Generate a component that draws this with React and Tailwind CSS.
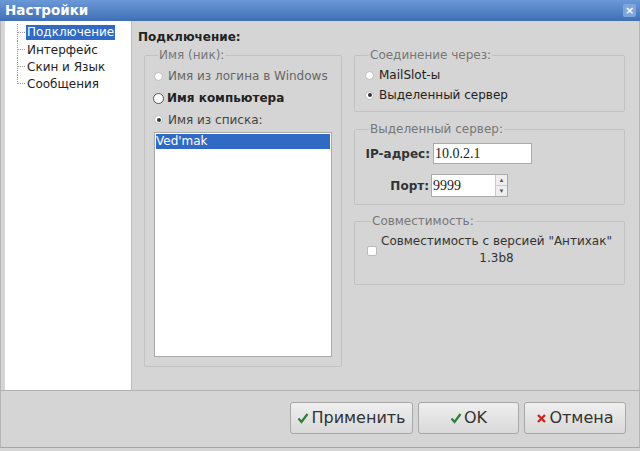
import React from 'react';

const font = { fontFamily: '"DejaVu Sans", Verdana, sans-serif' };

function Radio({ checked, focus }) {
  if (focus) {
    return (
      <span className="inline-flex w-[11px] h-[11px] rounded-full border border-[#555] bg-white shrink-0" />
    );
  }
  return (
    <span className="inline-flex items-center justify-center w-[9px] h-[9px] rounded-full border border-[#bbb] bg-white shrink-0">
      {checked && <span className="w-[4px] h-[4px] rounded-full bg-[#333]" />}
    </span>
  );
}

function Group({ title, className, children }) {
  return (
    <fieldset className={`border border-[#c2c2c2] rounded-[2px] ${className}`}>
      <legend className="ml-[4px] px-[1px] text-[12px] text-[#777] leading-[13px] whitespace-nowrap">{title}</legend>
      {children}
    </fieldset>
  );
}

function Check({ color }) {
  return (
    <svg width="12" height="12" viewBox="0 0 12 12">
      <path d="M1.5 6.5 L4.5 10 L10.5 2" fill="none" stroke={color} strokeWidth="2.2" />
    </svg>
  );
}

export default function App() {
  const tree = ['Подключение', 'Интерфейс', 'Скин и Язык', 'Сообщения'];

  return (
    <div className="w-[640px] h-[451px] bg-[#d5d5d5] flex flex-col text-[#222] overflow-hidden whitespace-nowrap" style={font}>
      {/* заголовок */}
      <div className="h-[21px] bg-gradient-to-b from-[#6b98d6] to-[#3f6fb6] flex items-center justify-between pl-[5px] pr-[4px]">
        <span className="text-white font-bold text-[13.5px]">Настройки</span>
        <span className="w-[13px] h-[13px] rounded-[2px] bg-[#7fa6dc] text-white text-[11px] leading-[13px] text-center font-bold">×</span>
      </div>

      <div className="flex-1 flex pl-[4px] pr-[4px] border-x border-[#b5b5b5]">
        {/* дерево */}
        <div className="w-[127px] bg-white border-r border-[#bdbdbd] pt-[3px] text-[12px]">
          {tree.map((t, i) => (
            <div key={t} className="flex items-center h-[17px]">
              <div className="relative w-[21px] h-[17px]">
                <div className={`absolute left-[12px] top-0 ${i === tree.length - 1 ? 'h-[9px]' : 'h-[17px]'} border-l border-dotted border-[#999]`} />
                <div className="absolute left-[12px] top-[8px] w-[8px] border-t border-dotted border-[#999]" />
              </div>
              <span className={i === 0 ? 'bg-[#316ac5] text-white px-[1px] leading-[15px]' : 'px-[1px]'}>{t}</span>
            </div>
          ))}
        </div>

        {/* содержимое */}
        <div className="flex-1 pl-[6px] pt-[8px]">
          <div className="font-bold text-[12px] leading-[16px]">Подключение:</div>
          <div className="flex mt-[4px]">
            <Group title="Имя (ник):" className="w-[198px] h-[318px] ml-[6px] px-[9px] pt-[3px]">
              <div className="flex items-center gap-[5px] h-[22px] text-[12px] text-[#666]">
                <Radio />
                <span>Имя из логина в Windows</span>
              </div>
              <div className="flex items-center gap-[3px] h-[22px] text-[12px] font-bold text-[#222] -ml-[1px]">
                <Radio focus />
                <span>Имя компьютера</span>
              </div>
              <div className="flex items-center gap-[5px] h-[21px] text-[12px] text-[#444]">
                <Radio checked />
                <span>Имя из списка:</span>
              </div>
              <div className="mt-[2px] w-[178px] h-[225px] bg-white border border-[#aaa] p-[1px]">
                <div className="bg-[#316ac5] text-white text-[12px] leading-[15px]">Ved'mak</div>
              </div>
            </Group>

            <div className="ml-[12px] w-[271px] flex flex-col">
              <Group title="Соединение через:" className="h-[63px] px-[10px] pt-[3px]">
                <div className="flex items-center gap-[5px] h-[20px] text-[12px]">
                  <Radio />
                  <span>MailSlot-ы</span>
                </div>
                <div className="flex items-center gap-[5px] h-[20px] text-[12px]">
                  <Radio checked />
                  <span>Выделенный сервер</span>
                </div>
              </Group>

              <Group title="Выделенный сервер:" className="h-[82px] mt-[11px] pl-[10px] pt-[7px]">
                <div className="flex items-center">
                  <span className="w-[65px] text-right text-[12px] font-bold text-[#333]">IP-адрес:</span>
                  <div className="ml-[3px] w-[99px] h-[21px] bg-white border border-[#aaa] flex items-center pl-[1px] text-[14px]" style={{ fontFamily: '"Liberation Serif", serif' }}>
                    10.0.2.1
                  </div>
                </div>
                <div className="flex items-center mt-[10px]">
                  <span className="w-[64px] text-right text-[12px] font-bold text-[#333]">Порт:</span>
                  <div className="ml-[2px] w-[77px] h-[23px] bg-white border border-[#aaa] flex items-center text-[14px]" style={{ fontFamily: '"Liberation Serif", serif' }}>
                    <span className="flex-1 pl-[1px]">9999</span>
                    <div className="w-[12px] h-full flex flex-col border-l border-[#ccc] bg-[#eee]">
                      <span className="flex-1 flex items-center justify-center text-[6px] text-[#555] border-b border-[#ccc]">▲</span>
                      <span className="flex-1 flex items-center justify-center text-[6px] text-[#555]">▼</span>
                    </div>
                  </div>
                </div>
              </Group>

              <Group title="Совместимость:" className="h-[70px] mt-[10px] pl-[12px]">
                <div className="flex items-center mt-[5px]">
                  <span className="w-[10px] h-[10px] bg-white border border-[#bbb] rounded-[2px] mt-[2px]" />
                  <div className="flex-1 text-center text-[12px] leading-[17px] text-[#333] pr-[8px]">
                    Совместимость с версией "Антихак"<br />1.3b8
                  </div>
                </div>
              </Group>
            </div>
          </div>
        </div>
      </div>

      {/* кнопки */}
      <div className="h-[58px] border-t border-[#b0b0b0] border-x border-b border-x-[#b5b5b5] border-b-[#a5a5a5] flex items-start justify-end gap-[5px] pt-[11px] pr-[13px] mb-[3px]">
        <button className="w-[123px] h-[32px] bg-gradient-to-b from-[#efefef] to-[#d9d9d9] border border-[#a8a8a8] rounded-[3px] flex items-center justify-center gap-[2px] text-[16px] text-[#333]">
          <Check color="#2e7d3a" />Применить
        </button>
        <button className="w-[101px] h-[32px] bg-gradient-to-b from-[#efefef] to-[#d9d9d9] border border-[#a8a8a8] rounded-[3px] flex items-center justify-center gap-[2px] text-[16px] text-[#333]">
          <Check color="#2e7d3a" />OK
        </button>
        <button className="w-[102px] h-[32px] bg-gradient-to-b from-[#efefef] to-[#d9d9d9] border border-[#a8a8a8] rounded-[3px] flex items-center justify-center gap-[2px] text-[16px] text-[#333]">
          <svg width="11" height="11" viewBox="0 0 11 11">
            <path d="M2 2 L9 9 M9 2 L2 9" stroke="#c62828" strokeWidth="2.4" />
          </svg>
          Отмена
        </button>
      </div>
    </div>
  );
}
